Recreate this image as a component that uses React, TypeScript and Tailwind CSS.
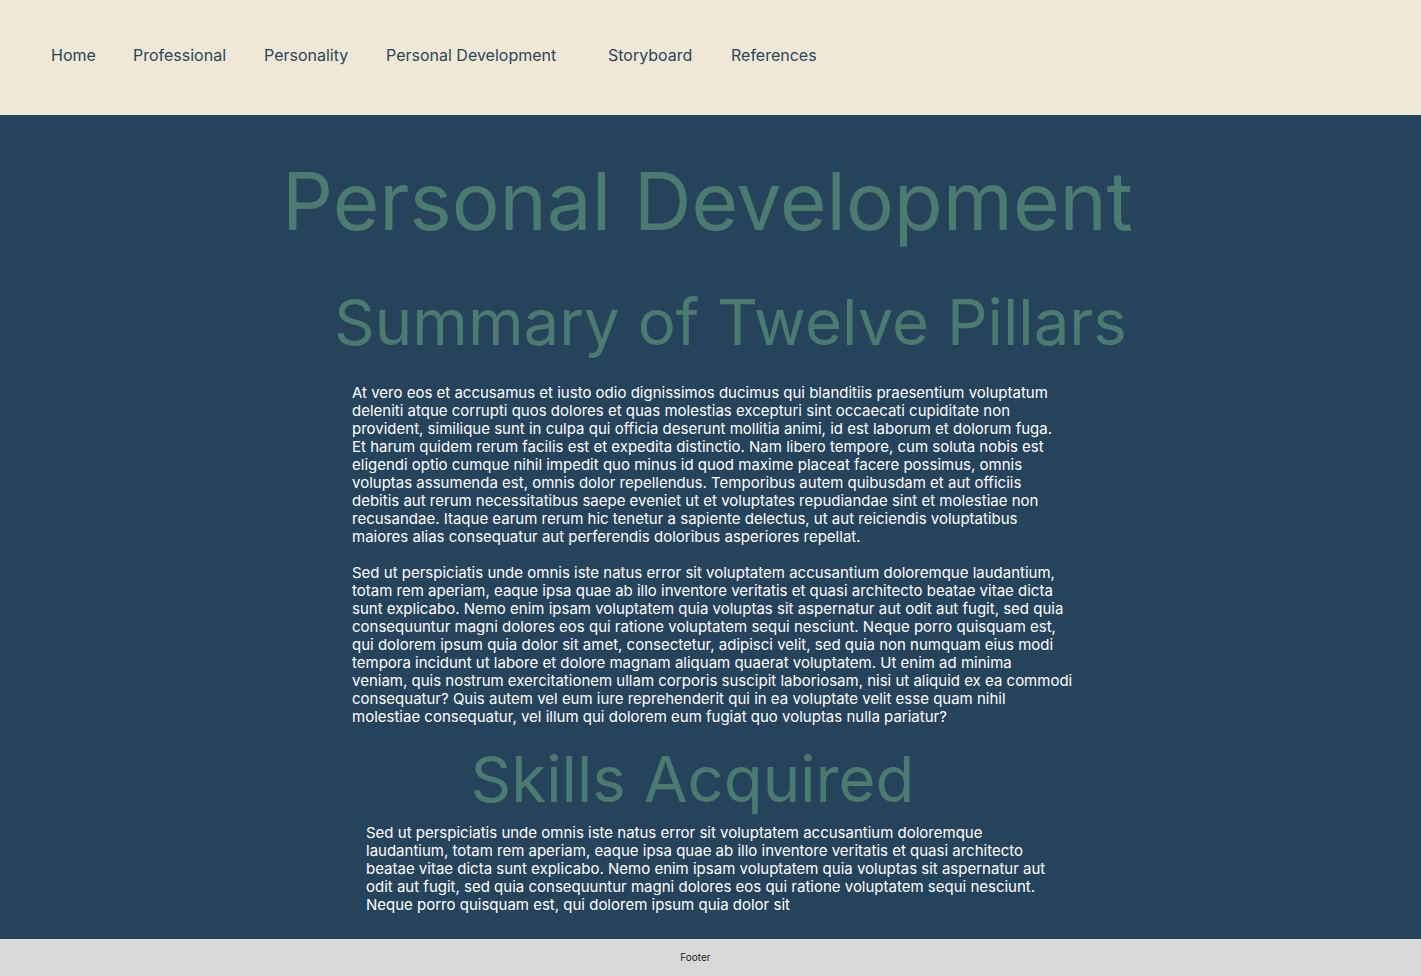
const navItems = [
  { name: 'Home', width: 'w-[82px]' },
  { name: 'Professional', width: 'w-[131px]' },
  { name: 'Personality', width: 'w-[122px]' },
  { name: 'Personal Development', width: 'w-[222px]' },
  { name: 'Storyboard', width: 'w-[123px]' },
  { name: 'References', width: 'w-auto' },
];

const pillarsText = [
  'At vero eos et accusamus et iusto odio dignissimos ducimus qui blanditiis praesentium voluptatum',
  'deleniti atque corrupti quos dolores et quas molestias excepturi sint occaecati cupiditate non',
  'provident, similique sunt in culpa qui officia deserunt mollitia animi, id est laborum et dolorum fuga.',
  'Et harum quidem rerum facilis est et expedita distinctio. Nam libero tempore, cum soluta nobis est',
  'eligendi optio cumque nihil impedit quo minus id quod maxime placeat facere possimus, omnis',
  'voluptas assumenda est, omnis dolor repellendus. Temporibus autem quibusdam et aut officiis',
  'debitis aut rerum necessitatibus saepe eveniet ut et voluptates repudiandae sint et molestiae non',
  'recusandae. Itaque earum rerum hic tenetur a sapiente delectus, ut aut reiciendis voluptatibus',
  'maiores alias consequatur aut perferendis doloribus asperiores repellat.',
];

const pillarsText2 = [
  'Sed ut perspiciatis unde omnis iste natus error sit voluptatem accusantium doloremque laudantium,',
  'totam rem aperiam, eaque ipsa quae ab illo inventore veritatis et quasi architecto beatae vitae dicta',
  'sunt explicabo. Nemo enim ipsam voluptatem quia voluptas sit aspernatur aut odit aut fugit, sed quia',
  'consequuntur magni dolores eos qui ratione voluptatem sequi nesciunt. Neque porro quisquam est,',
  'qui dolorem ipsum quia dolor sit amet, consectetur, adipisci velit, sed quia non numquam eius modi',
  'tempora incidunt ut labore et dolore magnam aliquam quaerat voluptatem. Ut enim ad minima',
  'veniam, quis nostrum exercitationem ullam corporis suscipit laboriosam, nisi ut aliquid ex ea commodi',
  'consequatur? Quis autem vel eum iure reprehenderit qui in ea voluptate velit esse quam nihil',
  'molestiae consequatur, vel illum qui dolorem eum fugiat quo voluptas nulla pariatur?',
];

const skillsText = [
  'Sed ut perspiciatis unde omnis iste natus error sit voluptatem accusantium doloremque',
  'laudantium, totam rem aperiam, eaque ipsa quae ab illo inventore veritatis et quasi architecto',
  'beatae vitae dicta sunt explicabo. Nemo enim ipsam voluptatem quia voluptas sit aspernatur aut',
  'odit aut fugit, sed quia consequuntur magni dolores eos qui ratione voluptatem sequi nesciunt.',
  'Neque porro quisquam est, qui dolorem ipsum quia dolor sit',
];

const Lines = ({ lines }: { lines: string[] }) => (
  <>
    {lines.map((line, i) => (
      <span key={i} className="block whitespace-nowrap">
        {line}
      </span>
    ))}
  </>
);

const App = () => {
  return (
    <div className="min-h-screen flex flex-col font-['Inter',sans-serif] bg-[#26435c]">
      {/* Header / nav */}
      <header className="h-[115px] bg-[#f0e8d6] flex items-center pl-[51px] pb-[6px]">
        <nav className="flex items-center">
          {navItems.map((item) => (
            <a
              key={item.name}
              href="#"
              className={`${item.width} text-[16px] leading-5 text-[#2b4559] whitespace-nowrap`}
            >
              {item.name}
            </a>
          ))}
        </nav>
      </header>

      {/* Main content */}
      <main className="flex-1 bg-[#26435c] pt-[46px] pb-[25px]">
        <h1 className="text-center text-[80px] leading-none text-[#4b7b6f] pr-[6px]">
          Personal Development
        </h1>

        <h2 className="mt-[49px] ml-[334px] text-[63.5px] leading-none text-[#4b7b6f] whitespace-nowrap">
          Summary of Twelve Pillars
        </h2>

        <div className="mt-[30px] ml-[352px] text-[15px] leading-[18px] text-white">
          <p>
            <Lines lines={pillarsText} />
          </p>
          <p className="mt-[18px]">
            <Lines lines={pillarsText2} />
          </p>
        </div>

        <h2 className="mt-[21px] text-center pr-[36px] text-[63.5px] leading-none text-[#4b7b6f]">
          Skills Acquired
        </h2>

        <p className="mt-[14px] ml-[366px] text-[15px] leading-[18px] text-white">
          <Lines lines={skillsText} />
        </p>
      </main>

      {/* Footer */}
      <footer className="h-[37px] bg-[#d9d9d9] flex items-center justify-center pr-[30px]">
        <span className="text-[10px] text-[#222222]">Footer</span>
      </footer>
    </div>
  );
};

export default App;
